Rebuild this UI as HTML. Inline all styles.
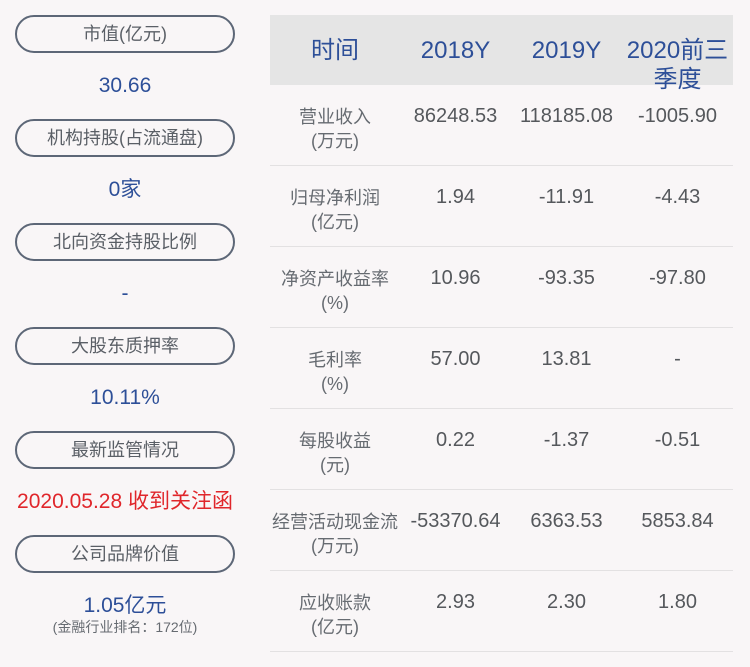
<!DOCTYPE html>
<html><head><meta charset="utf-8"><style>
*{margin:0;padding:0;box-sizing:border-box}
body{width:750px;height:667px;background:#f9f6f7;font-family:"Liberation Sans","Noto Sans CJK SC",sans-serif;position:relative;overflow:hidden}
.pill{position:absolute;left:15px;width:220px;height:38px;border:2px solid #5d6777;border-radius:19px;color:#5a5f66;font-size:18px;line-height:34px;text-align:center}
.v{position:absolute;left:15px;width:220px;text-align:center;color:#2d4f98;font-size:21px;line-height:24px}
.hd{position:absolute;left:270px;top:15px;width:463px;height:70px;background:#e5e5e5}
.h{position:absolute;color:#2d4f98;font-size:24px;line-height:30px;text-align:center}
.lb{position:absolute;left:270px;width:130px;color:#666b71;font-size:18px;line-height:24px;text-align:center}
.n{position:absolute;width:111px;color:#55585c;font-size:20px;line-height:24px;text-align:center}
.ln{position:absolute;left:270px;width:463px;height:1px;background:#e3e1e2}
</style></head><body>
<div class="pill" style="top:15px">市值(亿元)</div>
<div class="v" style="top:74px">30.66</div>
<div class="pill" style="top:119px">机构持股(占流通盘)</div>
<div class="v" style="top:178px">0家</div>
<div class="pill" style="top:223px">北向资金持股比例</div>
<div class="v" style="top:282px">-</div>
<div class="pill" style="top:327px">大股东质押率</div>
<div class="v" style="top:386px">10.11%</div>
<div class="pill" style="top:431px">最新监管情况</div>
<div class="v" style="top:490px;color:#e0262b;left:0;width:250px">2020.05.28 收到关注函</div>
<div class="pill" style="top:535px">公司品牌价值</div>
<div class="v" style="top:594px">1.05亿元</div>
<div class="v" style="top:618px;font-size:14px;line-height:18px;color:#666b71">(金融行业排名：172位)</div>

<div class="hd"></div>
<div class="h" style="left:270px;width:130px;top:36px">时间</div>
<div class="h" style="left:400px;width:111px;top:36px">2018Y</div>
<div class="h" style="left:511px;width:111px;top:36px">2019Y</div>
<div class="h" style="left:622px;width:111px;top:36px;line-height:29px">2020前三<br>季度</div>

<div class="lb" style="top:105px">营业收入<br>(万元)</div>
<div class="n" style="left:400px;top:104px">86248.53</div>
<div class="n" style="left:511px;top:104px">118185.08</div>
<div class="n" style="left:622px;top:104px">-1005.90</div>
<div class="ln" style="top:165px"></div>

<div class="lb" style="top:186px">归母净利润<br>(亿元)</div>
<div class="n" style="left:400px;top:185px">1.94</div>
<div class="n" style="left:511px;top:185px">-11.91</div>
<div class="n" style="left:622px;top:185px">-4.43</div>
<div class="ln" style="top:246px"></div>

<div class="lb" style="top:267px">净资产收益率<br>(%)</div>
<div class="n" style="left:400px;top:266px">10.96</div>
<div class="n" style="left:511px;top:266px">-93.35</div>
<div class="n" style="left:622px;top:266px">-97.80</div>
<div class="ln" style="top:327px"></div>

<div class="lb" style="top:348px">毛利率<br>(%)</div>
<div class="n" style="left:400px;top:347px">57.00</div>
<div class="n" style="left:511px;top:347px">13.81</div>
<div class="n" style="left:622px;top:347px">-</div>
<div class="ln" style="top:408px"></div>

<div class="lb" style="top:429px">每股收益<br>(元)</div>
<div class="n" style="left:400px;top:428px">0.22</div>
<div class="n" style="left:511px;top:428px">-1.37</div>
<div class="n" style="left:622px;top:428px">-0.51</div>
<div class="ln" style="top:489px"></div>

<div class="lb" style="top:510px">经营活动现金流<br>(万元)</div>
<div class="n" style="left:400px;top:509px">-53370.64</div>
<div class="n" style="left:511px;top:509px">6363.53</div>
<div class="n" style="left:622px;top:509px">5853.84</div>
<div class="ln" style="top:570px"></div>

<div class="lb" style="top:591px">应收账款<br>(亿元)</div>
<div class="n" style="left:400px;top:590px">2.93</div>
<div class="n" style="left:511px;top:590px">2.30</div>
<div class="n" style="left:622px;top:590px">1.80</div>
<div class="ln" style="top:651px"></div>
</body></html>
